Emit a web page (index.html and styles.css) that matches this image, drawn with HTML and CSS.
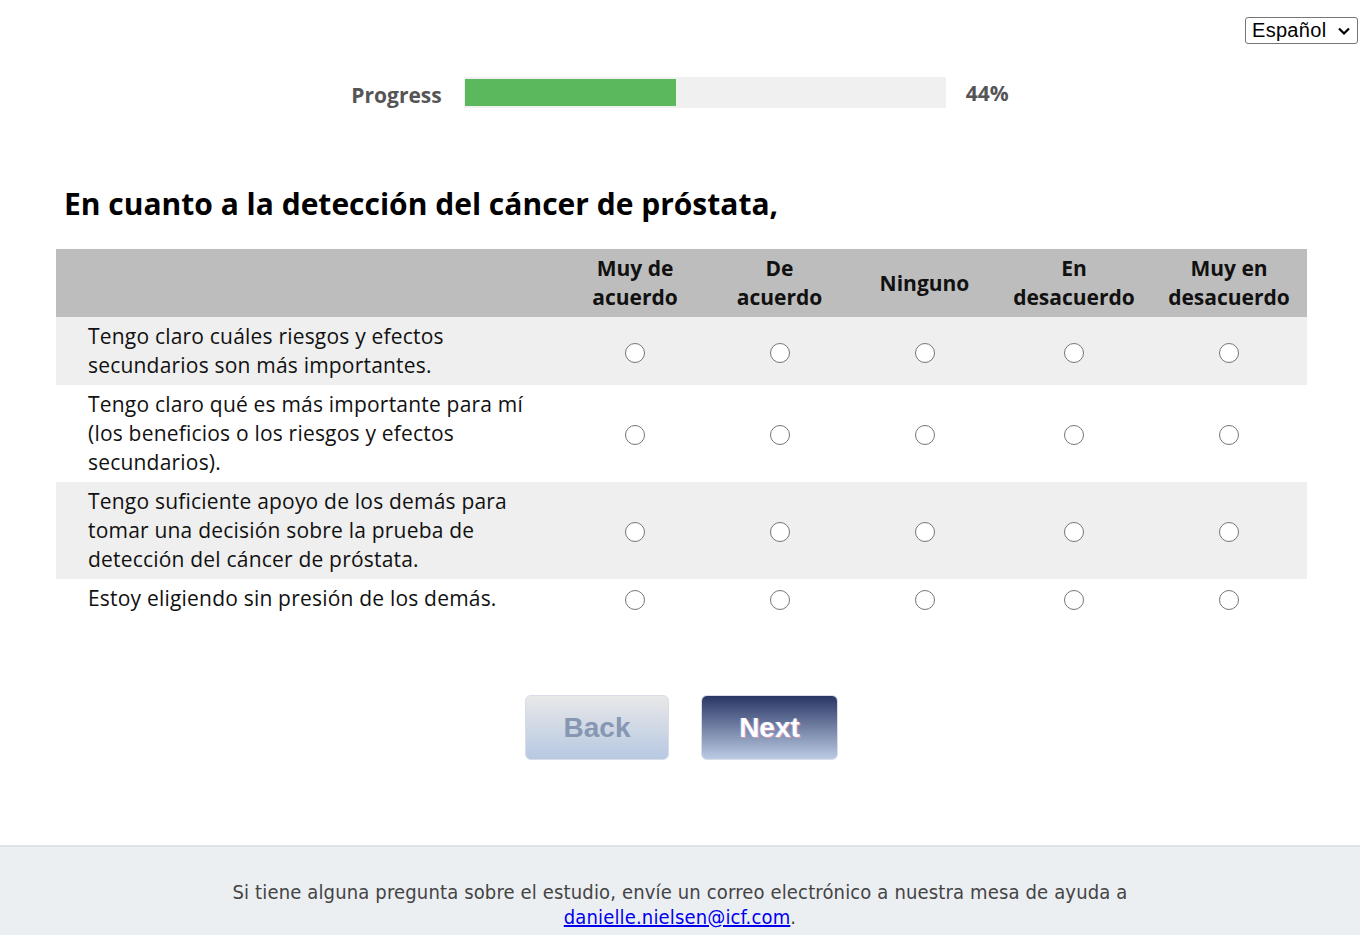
FILE: index.html
```html
<!DOCTYPE html>
<html lang="es">
<head>
<meta charset="utf-8">
<title>Encuesta</title>
<link rel="stylesheet" href="styles.css">
</head>
<body>
<div class="topbar">
  <div class="lang">Español
    <svg class="chev" width="14" height="10" viewBox="0 0 14 10"><path d="M2 2.5 L7 7.5 L12 2.5" fill="none" stroke="#000" stroke-width="2.2"/></svg>
  </div>
</div>
<div class="progress">
  <span class="plabel">Progress</span>
  <div class="track"><div class="fill" style="width:44%"></div></div>
  <span class="pct">44%</span>
</div>
<main class="content">
  <h1 class="question">En cuanto a la detección del cáncer de próstata,</h1>
  <table class="grid">
    <colgroup>
      <col class="c-item"><col class="c1"><col class="c2"><col class="c3"><col class="c4"><col class="c5">
    </colgroup>
    <thead>
      <tr>
        <th></th>
        <th>Muy de<br>acuerdo</th>
        <th>De<br>acuerdo</th>
        <th>Ninguno</th>
        <th>En<br>desacuerdo</th>
        <th>Muy en<br>desacuerdo</th>
      </tr>
    </thead>
    <tbody>
      <tr class="odd">
        <td class="item">Tengo claro cuáles riesgos y efectos<br>secundarios son más importantes.</td>
        <td><span class="radio"></span></td><td><span class="radio"></span></td><td><span class="radio"></span></td><td><span class="radio"></span></td><td><span class="radio"></span></td>
      </tr>
      <tr>
        <td class="item">Tengo claro qué es más importante para mí<br>(los beneficios o los riesgos y efectos<br>secundarios).</td>
        <td><span class="radio"></span></td><td><span class="radio"></span></td><td><span class="radio"></span></td><td><span class="radio"></span></td><td><span class="radio"></span></td>
      </tr>
      <tr class="odd">
        <td class="item">Tengo suficiente apoyo de los demás para<br>tomar una decisión sobre la prueba de<br>detección del cáncer de próstata.</td>
        <td><span class="radio"></span></td><td><span class="radio"></span></td><td><span class="radio"></span></td><td><span class="radio"></span></td><td><span class="radio"></span></td>
      </tr>
      <tr>
        <td class="item">Estoy eligiendo sin presión de los demás.</td>
        <td><span class="radio"></span></td><td><span class="radio"></span></td><td><span class="radio"></span></td><td><span class="radio"></span></td><td><span class="radio"></span></td>
      </tr>
    </tbody>
  </table>
  <div class="nav">
    <button class="btn back">Back</button>
    <button class="btn next">Next</button>
  </div>
</main>
<footer class="footer">
  <p>Si tiene alguna pregunta sobre el estudio, envíe un correo electrónico a nuestra mesa de ayuda a<br><a href="#">danielle.nielsen@icf.com</a>.</p>
</footer>
</body>
</html>
```

FILE: styles.css
```css
* { box-sizing: border-box; }
html, body { margin: 0; padding: 0; background: #fff; }
body { font-family: "Open Sans", "Liberation Sans", sans-serif; color: #111; }

.topbar { display: flex; justify-content: flex-end; padding: 17px 2px 0 0; height: 44px; }
.lang {
  display: flex; align-items: center; gap: 6px;
  width: 113px; height: 27px; padding: 0 6px 0 6px;
  border: 1px solid #767676; border-radius: 3px;
  font-family: "Liberation Sans", Arial, sans-serif; font-size: 20px; color: #000;
  letter-spacing: 0.3px;
}
.chev { margin-left: auto; }

.progress { display: flex; justify-content: center; align-items: center; margin-top: 33px; height: 31px; }
.plabel { font-size: 21px; font-weight: 700; color: #555; margin-right: 22px; margin-top: 4px; }
.track { width: 482px; height: 31px; background: #f0f0f0; padding: 2px 1px; }
.fill { height: 100%; background: #5cb85c; }
.pct { font-size: 21px; font-weight: 700; color: #555; margin-left: 20px; }

.content { padding: 0 53px 0 56px; }
.question { font-size: 30px; font-weight: 700; color: #000; margin: 0; padding: 77px 0 0 8px; line-height: 38px; }

.grid { width: 100%; border-collapse: collapse; margin-top: 26px; table-layout: fixed; }
.c-item { width: 507px; }
.c1 { width: 144px; }
.c2 { width: 145px; }
.c3 { width: 145px; }
.c4 { width: 154px; }
.c5 { width: 156px; }
.grid th {
  background: #bdbdbd; font-size: 21px; font-weight: 700; color: #111;
  line-height: 29px; padding: 5px 0; text-align: center;
}
.grid td { font-size: 21px; line-height: 29px; padding: 5px 0; text-align: center; vertical-align: middle; }
.grid td.item { text-align: left; padding-left: 32px; letter-spacing: 0.2px; }
.grid tr.odd td { background: #efefef; }
.radio {
  display: inline-block; width: 20px; height: 20px; border: 1px solid #767676; border-radius: 50%;
  background: #fff; vertical-align: middle;
}

.nav { display: flex; justify-content: center; gap: 32px; margin-top: 77px; }
.btn {
  height: 65px; border-radius: 6px; font-family: "Liberation Sans", Arial, sans-serif;
  font-size: 28px; font-weight: 700; border: 1px solid #d8dde6;
}
.back { width: 144px; background: linear-gradient(#e8e8e8, #b7c8e2); color: #8797b3; }
.next { width: 137px; background: linear-gradient(#293665, #bccbe4); color: #fff; text-shadow: 1px 1px 0 rgba(255,160,180,0.6), -1px 0 0 rgba(150,180,255,0.5); }

.footer {
  margin-top: 85px; background: #eceff2; border-top: 2px solid #dfe2e6;
  height: 90px; text-align: center;
}
.footer p {
  margin: 0; padding-top: 33px; font-family: "DejaVu Sans Condensed", "Liberation Sans", sans-serif;
  font-size: 20px; line-height: 25px; color: #444; letter-spacing: 0.15px;
}
.footer a { color: #0000ee; }
```
